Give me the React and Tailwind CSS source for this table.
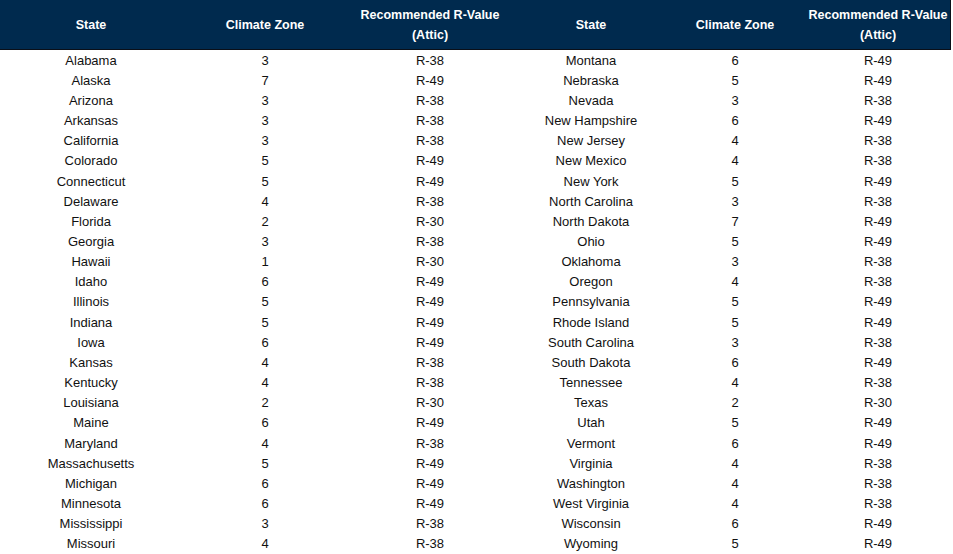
const rows = [
  ['Alabama', '3', 'R-38', 'Montana', '6', 'R-49'],
  ['Alaska', '7', 'R-49', 'Nebraska', '5', 'R-49'],
  ['Arizona', '3', 'R-38', 'Nevada', '3', 'R-38'],
  ['Arkansas', '3', 'R-38', 'New Hampshire', '6', 'R-49'],
  ['California', '3', 'R-38', 'New Jersey', '4', 'R-38'],
  ['Colorado', '5', 'R-49', 'New Mexico', '4', 'R-38'],
  ['Connecticut', '5', 'R-49', 'New York', '5', 'R-49'],
  ['Delaware', '4', 'R-38', 'North Carolina', '3', 'R-38'],
  ['Florida', '2', 'R-30', 'North Dakota', '7', 'R-49'],
  ['Georgia', '3', 'R-38', 'Ohio', '5', 'R-49'],
  ['Hawaii', '1', 'R-30', 'Oklahoma', '3', 'R-38'],
  ['Idaho', '6', 'R-49', 'Oregon', '4', 'R-38'],
  ['Illinois', '5', 'R-49', 'Pennsylvania', '5', 'R-49'],
  ['Indiana', '5', 'R-49', 'Rhode Island', '5', 'R-49'],
  ['Iowa', '6', 'R-49', 'South Carolina', '3', 'R-38'],
  ['Kansas', '4', 'R-38', 'South Dakota', '6', 'R-49'],
  ['Kentucky', '4', 'R-38', 'Tennessee', '4', 'R-38'],
  ['Louisiana', '2', 'R-30', 'Texas', '2', 'R-30'],
  ['Maine', '6', 'R-49', 'Utah', '5', 'R-49'],
  ['Maryland', '4', 'R-38', 'Vermont', '6', 'R-49'],
  ['Massachusetts', '5', 'R-49', 'Virginia', '4', 'R-38'],
  ['Michigan', '6', 'R-49', 'Washington', '4', 'R-38'],
  ['Minnesota', '6', 'R-49', 'West Virginia', '4', 'R-38'],
  ['Mississippi', '3', 'R-38', 'Wisconsin', '6', 'R-49'],
  ['Missouri', '4', 'R-38', 'Wyoming', '5', 'R-49'],
];

// column widths taken from the spreadsheet grid
const cols = 'grid grid-cols-[182px_166px_164px_158px_130px_151px]';

const Cell = ({ last, children, className = '' }) => (
  <div className={`flex items-center justify-center text-center ${last ? 'pl-[5px]' : ''} ${className}`}>
    {children}
  </div>
);

const RValueHeader = ({ last }) => (
  <Cell last={last}>
    <span>
      Recommended R-Value
      <br />
      (Attic)
    </span>
  </Cell>
);

export default function App() {
  return (
    <div className="w-[953px] h-[554px] overflow-hidden bg-white font-['Liberation_Sans',Arial,sans-serif]">
      <div className={`${cols} h-[50px] w-[951px] bg-[#002a4e] border-r border-b border-[#0a0f18] text-white font-bold text-[12.5px] leading-[20px]`}>
        <Cell>State</Cell>
        <Cell>Climate Zone</Cell>
        <RValueHeader />
        <Cell>State</Cell>
        <Cell>Climate Zone</Cell>
        <RValueHeader last />
      </div>
      <div className="text-[13px] text-[#111]">
        {rows.map((r) => (
          <div key={r[0]} className={`${cols} h-[20.17px]`}>
            {r.map((cell, i) => (
              <Cell key={i} last={i === 5} className="leading-none">
                {cell}
              </Cell>
            ))}
          </div>
        ))}
      </div>
    </div>
  );
}
